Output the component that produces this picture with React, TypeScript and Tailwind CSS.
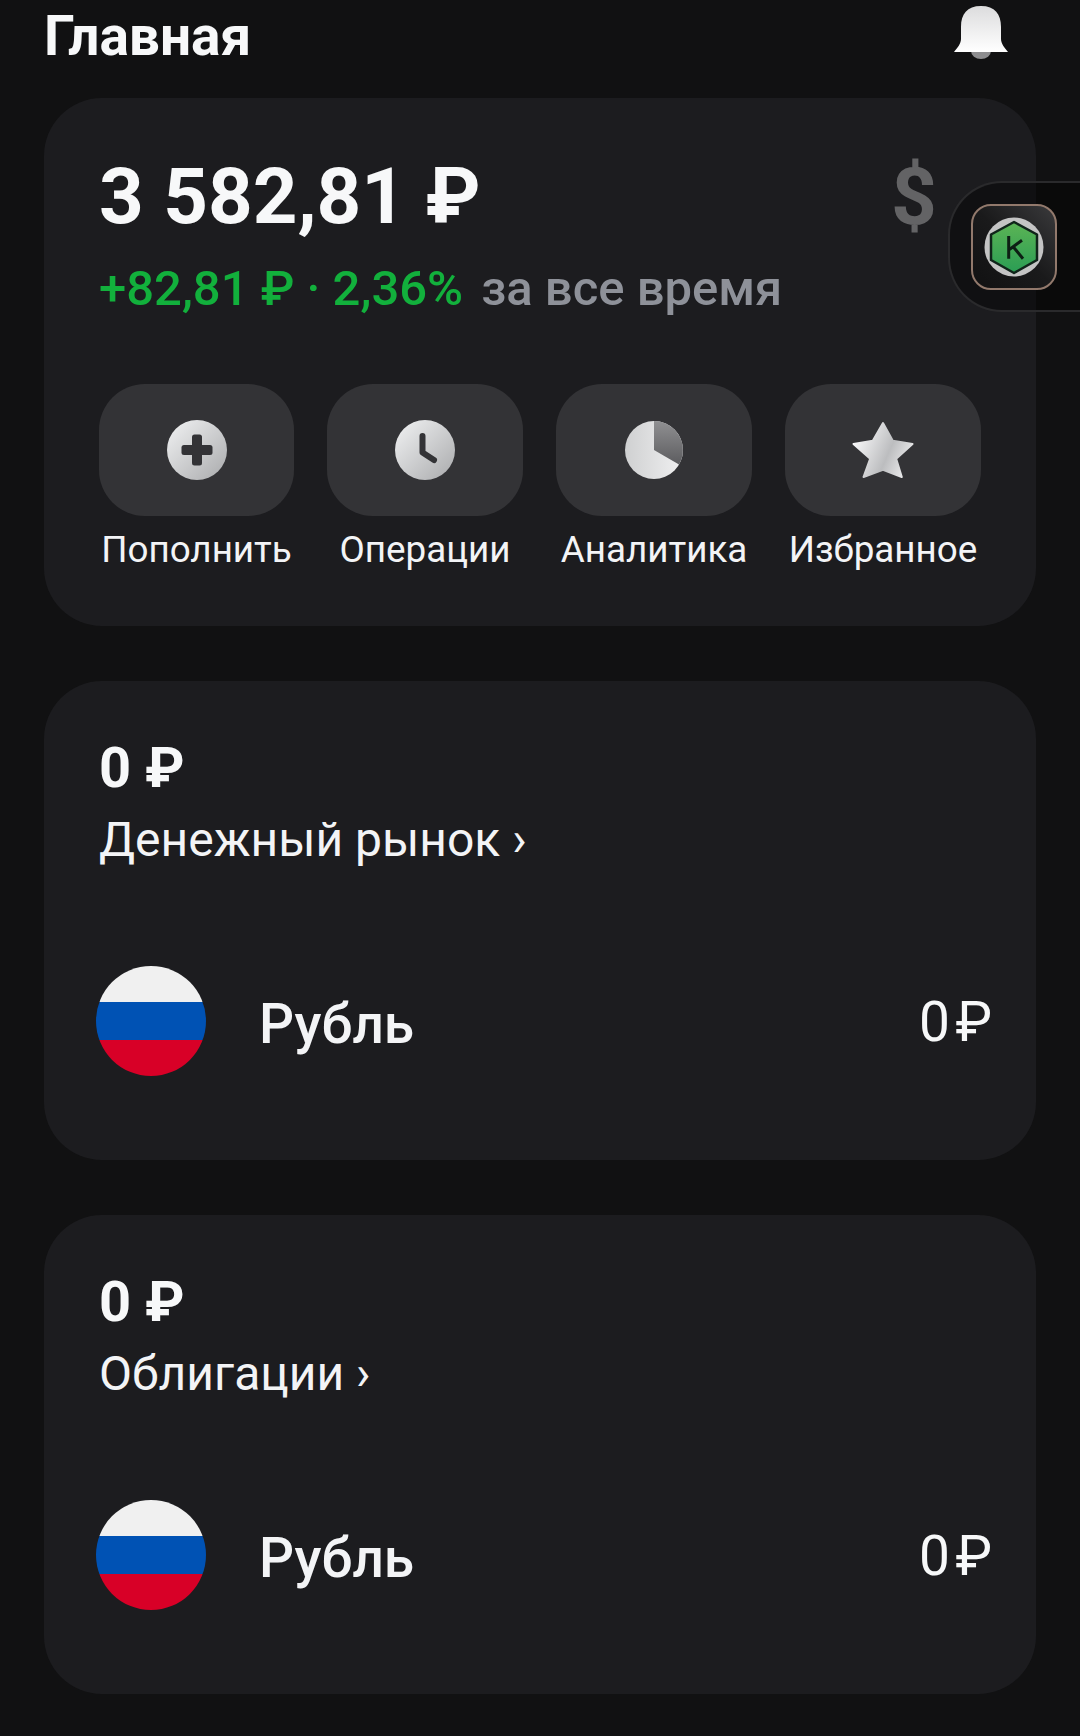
const font = "font-['Roboto','Liberation_Sans',sans-serif]";

function Grad({ id }: { id: string }) {
  return (
    <defs>
      <linearGradient id={id} x1="0" y1="0" x2="1" y2="1">
        <stop offset="0" stopColor="#f2f3f4" />
        <stop offset="1" stopColor="#a9aaac" />
      </linearGradient>
    </defs>
  );
}

function PlusIcon() {
  return (
    <svg width="62" height="62" viewBox="0 0 62 62">
      <Grad id="g-plus" />
      <circle cx="31" cy="31" r="30" fill="url(#g-plus)" />
      <rect x="26" y="15.5" width="10" height="31" rx="2.5" fill="#333336" />
      <rect x="15.5" y="26" width="31" height="10" rx="2.5" fill="#333336" />
    </svg>
  );
}

function ClockIcon() {
  return (
    <svg width="62" height="62" viewBox="0 0 62 62">
      <Grad id="g-clock" />
      <circle cx="31" cy="31" r="30" fill="url(#g-clock)" />
      <path d="M28.5 17v16.5l11.5 7.5" fill="none" stroke="#333336" strokeWidth="6" strokeLinecap="round" strokeLinejoin="round" />
    </svg>
  );
}

function PieIcon() {
  return (
    <svg width="60" height="60" viewBox="0 0 60 60">
      <defs>
        <linearGradient id="g-pie" x1="0" y1="0" x2="1" y2="0">
          <stop offset="0" stopColor="#cfd0d1" />
          <stop offset="1" stopColor="#f0f0f1" />
        </linearGradient>
        <linearGradient id="g-slice" x1="0" y1="0" x2="0" y2="1">
          <stop offset="0" stopColor="#909092" />
          <stop offset="1" stopColor="#5c5c5f" />
        </linearGradient>
      </defs>
      <circle cx="30" cy="30" r="29" fill="url(#g-pie)" />
      <path d="M30 1a29 29 0 0 1 25 43.5L30 30Z" fill="url(#g-slice)" />
    </svg>
  );
}

function StarIcon() {
  return (
    <svg width="62" height="60" viewBox="0 0 62 60">
      <defs>
        <linearGradient id="g-star" x1="0" y1="0.3" x2="1" y2="0.7">
          <stop offset="0" stopColor="#fafafb" />
          <stop offset="0.6" stopColor="#bcbdbf" />
          <stop offset="1" stopColor="#eeeeef" />
        </linearGradient>
      </defs>
      <path
        d="M31 3 40.8 20.7 60.5 24 44.2 38.7 49.8 57 31 49.7 11.5 57 18.2 38.7 1.5 24 20.8 20.7Z"
        fill="url(#g-star)"
        stroke="url(#g-star)"
        strokeWidth="2"
        strokeLinejoin="round"
      />
    </svg>
  );
}

function BellIcon() {
  return (
    <svg width="54" height="53" viewBox="0 0 54 53">
      <defs>
        <linearGradient id="g-bell" x1="0" y1="0" x2="0" y2="1">
          <stop offset="0" stopColor="#dcdcdd" />
          <stop offset="1" stopColor="#ffffff" />
        </linearGradient>
      </defs>
      <path d="M17 45h20a10 8 0 0 1-20 0Z" fill="#8d8d8f" />
      <path
        d="M27 0C13 0 7 8 7 21v12C7 38 3 42 0 46h54c-3-4-7-8-7-13V21C47 8 41 0 27 0Z"
        fill="url(#g-bell)"
      />
    </svg>
  );
}

function FloatingBadge() {
  return (
    <div className="absolute right-0 top-[181px] flex h-[131px] w-[132px] items-center rounded-l-[54px] border-y-2 border-l-2 border-[#2a2a2c] bg-black/40 pl-[21px]">
      <div className="flex h-[86px] w-[86px] items-center justify-center rounded-[20px] border-2 border-[#92796c] bg-gradient-to-bl from-[#3a3a3c] via-[#1a1a1b] to-[#111112]">
        <svg width="60" height="60" viewBox="0 0 60 60">
          <defs>
            <linearGradient id="g-k" x1="0.5" y1="0" x2="0.5" y2="1">
              <stop offset="0" stopColor="#5cb455" />
              <stop offset="1" stopColor="#2a9d54" />
            </linearGradient>
          </defs>
          <circle cx="30" cy="30" r="29.5" fill="#c4c4c4" />
          <path d="M30 5 53 17.5V43L30 56 7 43V17.5Z" fill="url(#g-k)" stroke="#10241a" strokeWidth="2.5" strokeLinejoin="round" />
          <path d="M24.7 19v22.7M24.7 33 38 23.3M29 29.5 39 41.7" fill="none" stroke="#0d1f14" strokeWidth="3" />
        </svg>
      </div>
    </div>
  );
}

function Action({ icon, label }: { icon: React.ReactNode; label: string }) {
  return (
    <div className="flex flex-col items-center">
      <div className="flex h-[132px] w-full items-center justify-center rounded-[46px] bg-[#333336]">{icon}</div>
      <div className="mt-[12px] whitespace-nowrap text-[36.8px] leading-[44px] text-[#f3f4f6]">{label}</div>
    </div>
  );
}

function RubleFlag() {
  return (
    <div className="flex h-[110px] w-[110px] shrink-0 flex-col overflow-hidden rounded-full">
      <div className="h-[36px] bg-[#f0f0f0]" />
      <div className="h-[38px] bg-[#0052b4]" />
      <div className="h-[36px] bg-[#d80027]" />
    </div>
  );
}

function Section({ title }: { title: string }) {
  return (
    <section className="h-[479.5px] rounded-[58px] bg-[#1c1c1f] pl-[55px] pr-[44px] pt-[54px]">
      <div className="text-[56px] font-bold leading-[66px] text-[#f7f8f9]">0 ₽</div>
      <div className="mt-[11px] text-[48px] leading-[56px] text-[#f3f4f6]">{title} ›</div>
      <div className="mt-[98px] flex items-center">
        <div className="-ml-[3px]">
          <RubleFlag />
        </div>
        <div className="ml-[53px] flex-1 pt-[6px] text-[55px] font-medium leading-[60px] text-[#f3f4f6]">Рубль</div>
        <div className="pt-[3px] text-[55px] leading-[60px] text-[#f7f8f9]">0{"\u200a"}₽</div>
      </div>
    </section>
  );
}

export default function App() {
  return (
    <div className={`relative h-[1736px] w-[1080px] overflow-hidden bg-[#111112] ${font}`}>
      <header className="flex h-[98px] items-start justify-between pl-[44px] pr-[72px] pt-[6px]">
        <h1 className="text-[55px] font-bold leading-[60px] text-[#f7f8f9]">Главная</h1>
        <BellIcon />
      </header>

      <main className="flex flex-col gap-[54.5px] px-[44px]">
        <section className="h-[528px] rounded-[58px] bg-[#1c1c1f] px-[55px] pt-[56px]">
          <div className="flex items-start justify-between">
            <div className="text-[78px] font-bold leading-[86px] text-[#f7f8f9]">3 582,81 ₽</div>
            <div className="mr-[44px] text-[80px] font-bold leading-[86px] text-[#636365]">$</div>
          </div>
          <div className="mt-[21px] flex items-baseline gap-[18px] text-[49px] font-medium leading-[56px]">
            <span className="text-[#12b03c]">+82,81 ₽ · 2,36%</span>
            <span className="text-[#8e9199]">за все время</span>
          </div>
          <div className="mt-[67px] grid grid-cols-[195px_196px_196px_196px] gap-[33px]">
            <Action icon={<PlusIcon />} label="Пополнить" />
            <Action icon={<ClockIcon />} label="Операции" />
            <Action icon={<PieIcon />} label="Аналитика" />
            <Action icon={<StarIcon />} label="Избранное" />
          </div>
        </section>

        <Section title="Денежный рынок" />
        <Section title="Облигации" />
      </main>

      <FloatingBadge />
    </div>
  );
}
